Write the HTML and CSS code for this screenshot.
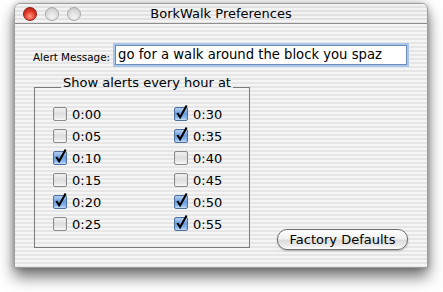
FILE: index.html
```html
<!DOCTYPE html>
<html>
<head>
<meta charset="utf-8">
<link rel="stylesheet" href="styles.css">
</head>
<body>
<div class="window">
  <div class="titlebar">
    <div class="lights">
      <span class="light red"></span>
      <span class="light"></span>
      <span class="light"></span>
    </div>
    <div class="title">BorkWalk Preferences</div>
    <div></div>
  </div>
  <div class="content">
    <div class="msg-row">
      <span class="msg-label">Alert Message:</span>
      <div class="msg-input">go for a walk around the block you spaz</div>
    </div>
    <div class="lower">
      <fieldset class="group">
        <legend>Show alerts every hour at</legend>
        <div class="grid">
          <div class="item"><span class="cb"></span><span>0:00</span></div>
          <div class="item"><span class="cb"></span><span>0:05</span></div>
          <div class="item"><span class="cb on"><svg viewBox="0 0 16 16"><path d="M3.5 8.5 L6.5 13 L13.5 0.5"/></svg></span><span>0:10</span></div>
          <div class="item"><span class="cb"></span><span>0:15</span></div>
          <div class="item"><span class="cb on"><svg viewBox="0 0 16 16"><path d="M3.5 8.5 L6.5 13 L13.5 0.5"/></svg></span><span>0:20</span></div>
          <div class="item"><span class="cb"></span><span>0:25</span></div>
          <div class="item"><span class="cb on"><svg viewBox="0 0 16 16"><path d="M3.5 8.5 L6.5 13 L13.5 0.5"/></svg></span><span>0:30</span></div>
          <div class="item"><span class="cb on"><svg viewBox="0 0 16 16"><path d="M3.5 8.5 L6.5 13 L13.5 0.5"/></svg></span><span>0:35</span></div>
          <div class="item"><span class="cb"></span><span>0:40</span></div>
          <div class="item"><span class="cb"></span><span>0:45</span></div>
          <div class="item"><span class="cb on"><svg viewBox="0 0 16 16"><path d="M3.5 8.5 L6.5 13 L13.5 0.5"/></svg></span><span>0:50</span></div>
          <div class="item"><span class="cb on"><svg viewBox="0 0 16 16"><path d="M3.5 8.5 L6.5 13 L13.5 0.5"/></svg></span><span>0:55</span></div>
        </div>
      </fieldset>
      <button class="btn">Factory Defaults</button>
    </div>
  </div>
</div>
</body>
</html>
```
FILE: styles.css
```css
html, body {
  margin: 0;
  padding: 0;
  background: #fff;
}
body {
  font-family: "DejaVu Sans", "Liberation Sans", sans-serif;
  color: #000;
  width: 443px;
  height: 292px;
  overflow: hidden;
}
.window {
  box-sizing: border-box;
  width: 414px;
  height: 265px;
  margin: 3px 0 0 14px;
  border: 1px solid #9c9c9c;
  border-radius: 6px 6px 0 0;
  background: repeating-linear-gradient(to bottom, #f5f5f5 0 2px, #e6e6e6 2px 4px);
  box-shadow: 0 9px 15px rgba(0,0,0,0.55), 0 0 6px rgba(0,0,0,0.25);
  display: flex;
  flex-direction: column;
}
.titlebar {
  height: 19px;
  border-bottom: 1px solid #8e8e8e;
  border-radius: 5px 5px 0 0;
  background: repeating-linear-gradient(to bottom, #f3f3f3 0 2px, #e2e2e2 2px 4px);
  display: grid;
  grid-template-columns: 1fr auto 1fr;
  align-items: center;
}
.lights {
  display: flex;
  gap: 8px;
  padding-left: 8px;
  padding-top: 1px;
}
.light {
  width: 14px;
  height: 14px;
  border-radius: 50%;
  box-sizing: border-box;
  border: 1px solid #a9a9a9;
  background: radial-gradient(circle at 50% 75%, #f4f4f4 0%, #dcdcdc 55%, #c4c4c4 100%);
}
.light.red {
  border-color: #8a1a12;
  background: radial-gradient(circle at 50% 70%, #ff9a86 0%, #e2392a 50%, #a8160c 100%);
}
.title {
  font-size: 13px;
  line-height: 19px;
  text-align: center;
}
.content {
  flex: 1;
  display: flex;
  flex-direction: column;
  padding: 21px 19px 0 18px;
}
.msg-row {
  display: flex;
  align-items: center;
  gap: 5px;
}
.msg-label {
  font-size: 10.4px;
  line-height: 12px;
  padding-top: 3px;
}
.msg-input {
  box-sizing: border-box;
  width: 292px;
  height: 20px;
  border: 1px solid #6f8bb3;
  background: #fff;
  box-shadow: 0 0 0 2px #a9c6ec;
  font-size: 13.2px;
  line-height: 18px;
  padding-left: 2px;
  white-space: nowrap;
  overflow: hidden;
}
.lower {
  display: flex;
  justify-content: space-between;
  align-items: flex-end;
  margin-top: 11px;
}
.group {
  box-sizing: border-box;
  width: 216px;
  margin: 0 0 0 1px;
  padding: 0 0 12px 18px;
  border: 1px solid #7c7c7c;
  min-width: 0;
}
.group legend {
  font-size: 13px;
  line-height: 14px;
  margin-left: 8px;
  padding: 0 2px 8px 2px;
}
.grid {
  display: grid;
  grid-auto-flow: column;
  grid-template-rows: repeat(6, 22px);
  grid-template-columns: 121px auto;
  padding-top: 5px;
}
.item {
  display: flex;
  align-items: center;
  gap: 5px;
  font-size: 13px;
}
.cb {
  position: relative;
  box-sizing: border-box;
  width: 14px;
  height: 14px;
  border: 1px solid #8b8b8b;
  border-radius: 2px;
  background: linear-gradient(to bottom, #f4f4f4 0%, #dedede 45%, #e9e9e9 80%, #ffffff 100%);
  box-shadow: inset 0 0 1px rgba(0,0,0,0.2);
}
.cb.on {
  border-color: #4f6f9c;
  background: linear-gradient(to bottom, #b6d3f5 0%, #6e9fdc 45%, #8ab8ec 80%, #cde3fb 100%);
}
.cb svg {
  position: absolute;
  left: -1px;
  top: -3px;
  width: 15px;
  height: 15px;
  overflow: visible;
}
.cb svg path {
  fill: none;
  stroke: #000;
  stroke-width: 2.2;
  stroke-linecap: butt;
  stroke-linejoin: miter;
}
.btn {
  box-sizing: border-box;
  width: 131px;
  height: 21px;
  margin-bottom: -2px;
  border: 1px solid #6e6e6e;
  border-radius: 10px;
  background: linear-gradient(to bottom, #ffffff 0%, #f0f0f0 45%, #dcdcdc 55%, #ededed 85%, #ffffff 100%);
  box-shadow: 0 1px 2px rgba(0,0,0,0.25);
  font-family: "DejaVu Sans", "Liberation Sans", sans-serif;
  font-size: 13px;
  line-height: 18px;
  padding: 0;
  color: #000;
}
```
